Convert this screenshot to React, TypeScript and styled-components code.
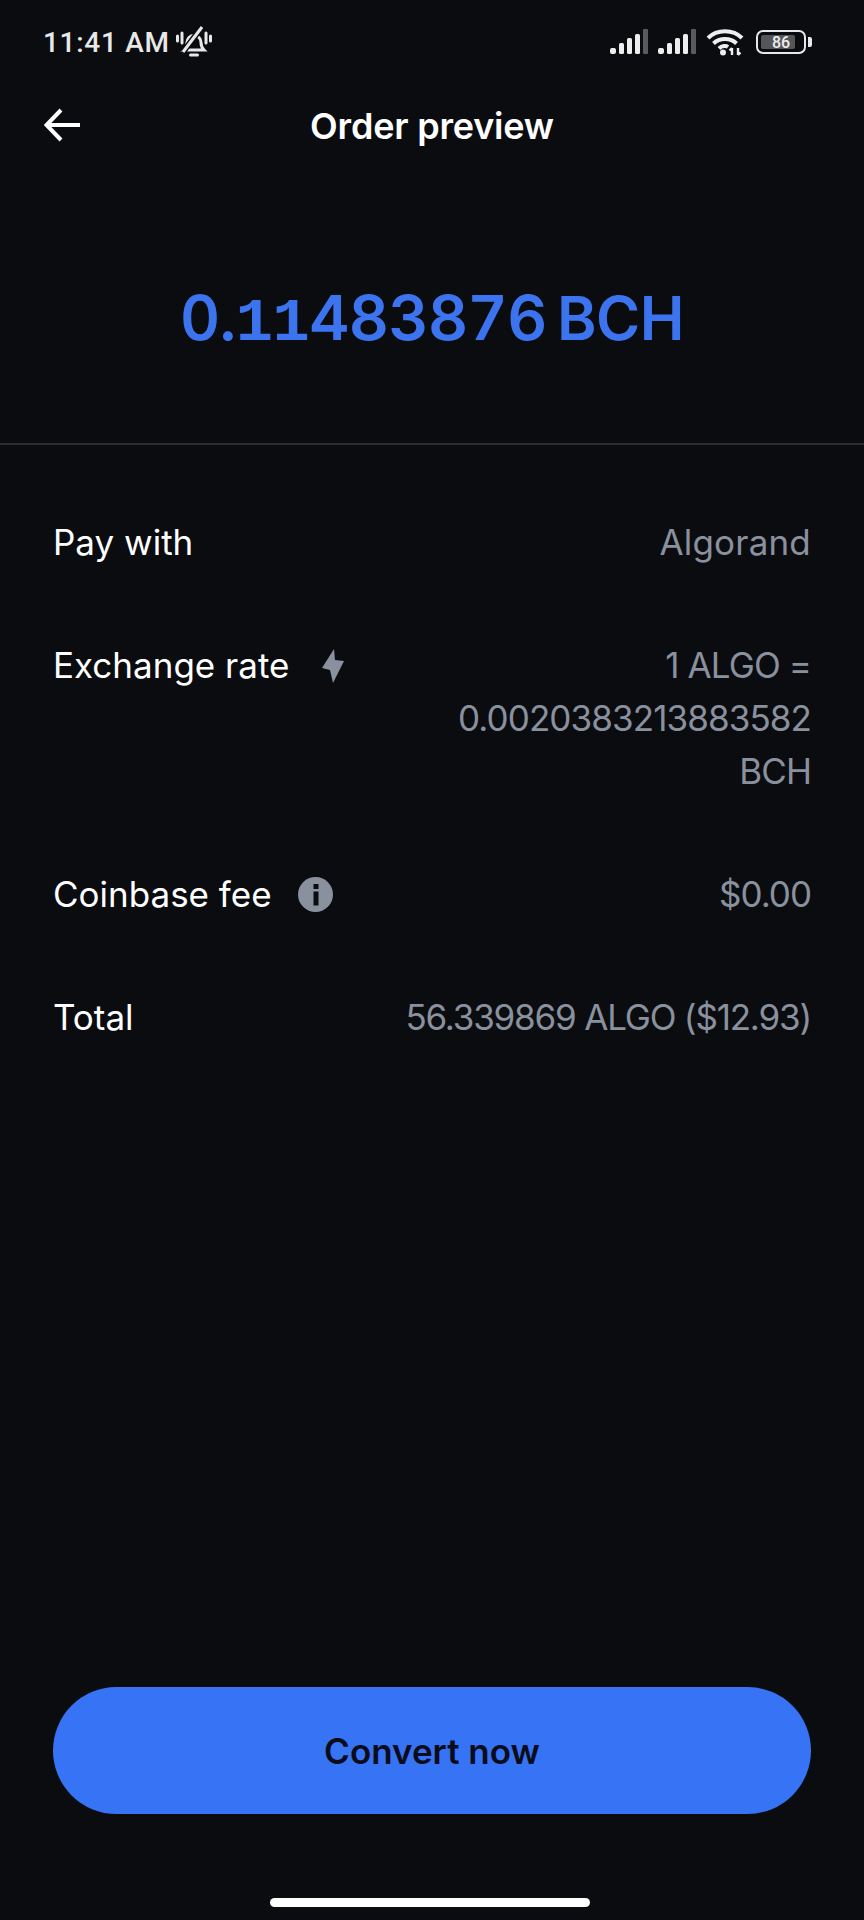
import React from "react";
import styled, { createGlobalStyle } from "styled-components";

const GlobalStyle = createGlobalStyle`
  html, body {
    margin: 0;
    padding: 0;
    background: #0a0c10;
  }
`;

const Page = styled.div`
  width: 864px;
  height: 1920px;
  display: flex;
  flex-direction: column;
  background: #0a0c10;
  color: #fff;
  font-family: Inter, "Liberation Sans", sans-serif;
  overflow: hidden;
`;

const StatusBar = styled.div`
  height: 88px;
  box-sizing: border-box;
  padding: 25px 52px 0 43px;
  display: flex;
  justify-content: space-between;
  align-items: flex-start;
`;

const StatusLeft = styled.div`
  display: flex;
  align-items: center;
  gap: 6px;
  height: 34px;
`;

const Clock = styled.span`
  font-family: Roboto, sans-serif;
  font-size: 28px;
  font-weight: 500;
  letter-spacing: 0.7px;
  color: #e8e8e8;
`;

const StatusRight = styled.div`
  display: flex;
  align-items: center;
  height: 34px;
  gap: 10px;
`;

const Battery = styled.div`
  display: flex;
  align-items: center;
  gap: 2px;
  margin-left: 2px;
`;

const BatteryBody = styled.div`
  position: relative;
  width: 50px;
  height: 24px;
  box-sizing: border-box;
  border: 2px solid #e8e8e8;
  border-radius: 7px;
  padding: 3px;
`;

const BatteryFill = styled.div`
  height: 100%;
  background: #55565a;
  border-radius: 2px;
`;

const BatteryLabel = styled.span`
  position: absolute;
  inset: 0;
  display: flex;
  align-items: center;
  justify-content: center;
  font-family: Roboto, sans-serif;
  font-size: 16px;
  font-weight: 500;
  color: #eee;
`;

const BatteryNub = styled.div`
  width: 4px;
  height: 10px;
  background: #e8e8e8;
  border-radius: 0 2px 2px 0;
`;

const Header = styled.header`
  position: relative;
  height: 72px;
  box-sizing: border-box;
  padding-top: 4px;
  display: flex;
  align-items: center;
  justify-content: center;
`;

const BackButton = styled.button`
  position: absolute;
  left: 44px;
  top: 20px;
  padding: 0;
  border: none;
  background: none;
  display: flex;
`;

const Title = styled.h1`
  margin: 0;
  font-size: 36px;
  font-weight: 600;
  line-height: 44px;
  letter-spacing: -0.2px;
`;

const AmountBlock = styled.div`
  height: 285px;
  box-sizing: border-box;
  padding-top: 122px;
  border-bottom: 2px solid #2a2c31;
  text-align: center;
`;

const Amount = styled.div`
  font-size: 62px;
  line-height: 72px;
  font-weight: 600;
  color: #3b74ee;
  font-variant-numeric: tabular-nums;
  letter-spacing: -0.5px;
  word-spacing: -6px;
`;

const One = styled.span`
  font-family: "Liberation Mono", monospace;
  font-weight: 700;
`;

const Unit = styled.span`
  font-size: 60px;
`;

const Details = styled.section`
  flex: 1;
  padding: 71px 53px 0;
  display: flex;
  flex-direction: column;
  gap: 70px;
`;

const Row = styled.div`
  display: flex;
  justify-content: space-between;
  align-items: flex-start;
  font-size: 35px;
  line-height: 53px;
`;

const Label = styled.div<{ $gap?: number }>`
  display: flex;
  align-items: center;
  gap: ${(p) => p.$gap ?? 26}px;
`;

const Value = styled.div<{ $maxWidth?: number; $spacing?: number }>`
  color: #8a919e;
  text-align: right;
  letter-spacing: ${(p) => p.$spacing ?? 0.2}px;
  max-width: ${(p) => (p.$maxWidth ? `${p.$maxWidth}px` : "none")};
`;

const ConvertButton = styled.button`
  display: block;
  width: 758px;
  height: 127px;
  margin: 0 53px;
  border: none;
  border-radius: 64px;
  background: #3773f5;
  color: #0a0c1a;
  font-family: inherit;
  font-size: 35px;
  font-weight: 600;
`;

const HomeBarArea = styled.div`
  height: 106px;
  box-sizing: border-box;
  padding: 84px 5px 0 0;
  display: flex;
  justify-content: center;
`;

const HomeBar = styled.div`
  width: 320px;
  height: 9px;
  border-radius: 5px;
  background: #fff;
`;

const BellMuted = () => (
  <svg width="36" height="32" viewBox="0 0 36 32" fill="none" stroke="#e8e8e8" strokeWidth="3">
    <path d="M8 24c2-2 3-3.500 3-7.500 0-4 3-7 7-7s7 3 7 7c0 4 1 5.500 3 7.500z" />
    <path d="M14.500 29h7" strokeWidth="3" strokeLinecap="round" />
    <path d="M7 26 26 1" stroke="#0a0c10" strokeWidth="6" />
    <path d="M7 26 26 1" />
    <path d="M1.500 10v5M6 7v10M30 7v10M34.500 10v5" strokeLinecap="round" />
  </svg>
);

const Signal = () => (
  <svg width="38" height="26" viewBox="0 0 38 26" fill="#eee">
    <rect x="0" y="19" width="6" height="6" rx="2" />
    <rect x="9" y="14" width="5" height="11" rx="1.500" />
    <rect x="17" y="9" width="5" height="16" rx="1.500" />
    <rect x="25" y="5" width="5" height="20" rx="1.500" />
    <rect x="33" y="0" width="5" height="25" rx="1" fill="#5a5a5c" />
  </svg>
);

const Wifi = () => (
  <svg width="38" height="28" viewBox="0 0 38 28" fill="none" stroke="#eee" strokeWidth="4">
    <path d="M2 10C11 1 27 1 36 10" />
    <path d="M7.500 15.500C13.500 9.500 24.500 9.500 30.500 15.500" />
    <path d="M13 20.500C16 17.500 20 17.500 22 19" />
    <circle cx="17" cy="24.500" r="3" fill="#eee" stroke="none" />
    <path d="M26 27v-7M23.500 22.500 26 20M32 20v7M34.500 24.500 32 27" strokeWidth="2.400" />
  </svg>
);

const BackArrow = () => (
  <svg width="36" height="34" viewBox="0 0 36 34" fill="none" stroke="#fff" strokeWidth="4">
    <path d="M36 17H3" />
    <path d="M17 2 2.500 17 17 32" />
  </svg>
);

const Bolt = () => (
  <svg width="22" height="34" viewBox="0 0 22 34" fill="#8a919e">
    <path d="M12 0 0 19l8 2 3 13 11-22-9-1z" />
  </svg>
);

const InfoIcon = () => (
  <svg width="35" height="35" viewBox="0 0 35 35">
    <circle cx="17.500" cy="17.500" r="17.500" fill="#8a919e" />
    <rect x="15.500" y="7" width="5" height="5" fill="#0a0c10" />
    <rect x="15.500" y="14.500" width="5" height="14" fill="#0a0c10" />
  </svg>
);

export default function App() {
  return (
    <Page>
      <GlobalStyle />
      <StatusBar>
        <StatusLeft>
          <Clock>11:41 AM</Clock>
          <BellMuted />
        </StatusLeft>
        <StatusRight>
          <Signal />
          <Signal />
          <Wifi />
          <Battery>
            <BatteryBody>
              <BatteryFill style={{ width: "86%" }} />
              <BatteryLabel>86</BatteryLabel>
            </BatteryBody>
            <BatteryNub />
          </Battery>
        </StatusRight>
      </StatusBar>
      <Header>
        <BackButton type="button">
          <BackArrow />
        </BackButton>
        <Title>Order preview</Title>
      </Header>
      <AmountBlock>
        <Amount>
          0.<One>11</One>483876 <Unit>BCH</Unit>
        </Amount>
      </AmountBlock>
      <Details>
        <Row>
          <Label>Pay with</Label>
          <Value>Algorand</Value>
        </Row>
        <Row>
          <Label $gap={33}>
            Exchange rate
            <Bolt />
          </Label>
          <Value $maxWidth={370} $spacing={-0.9}>
            1 ALGO = 0.0020383213883582 BCH
          </Value>
        </Row>
        <Row>
          <Label>
            Coinbase fee
            <InfoIcon />
          </Label>
          <Value $spacing={-1}>$0.00</Value>
        </Row>
        <Row>
          <Label>Total</Label>
          <Value $spacing={-1.2}>56.339869 ALGO ($12.93)</Value>
        </Row>
      </Details>
      <ConvertButton type="button">Convert now</ConvertButton>
      <HomeBarArea>
        <HomeBar />
      </HomeBarArea>
    </Page>
  );
}
